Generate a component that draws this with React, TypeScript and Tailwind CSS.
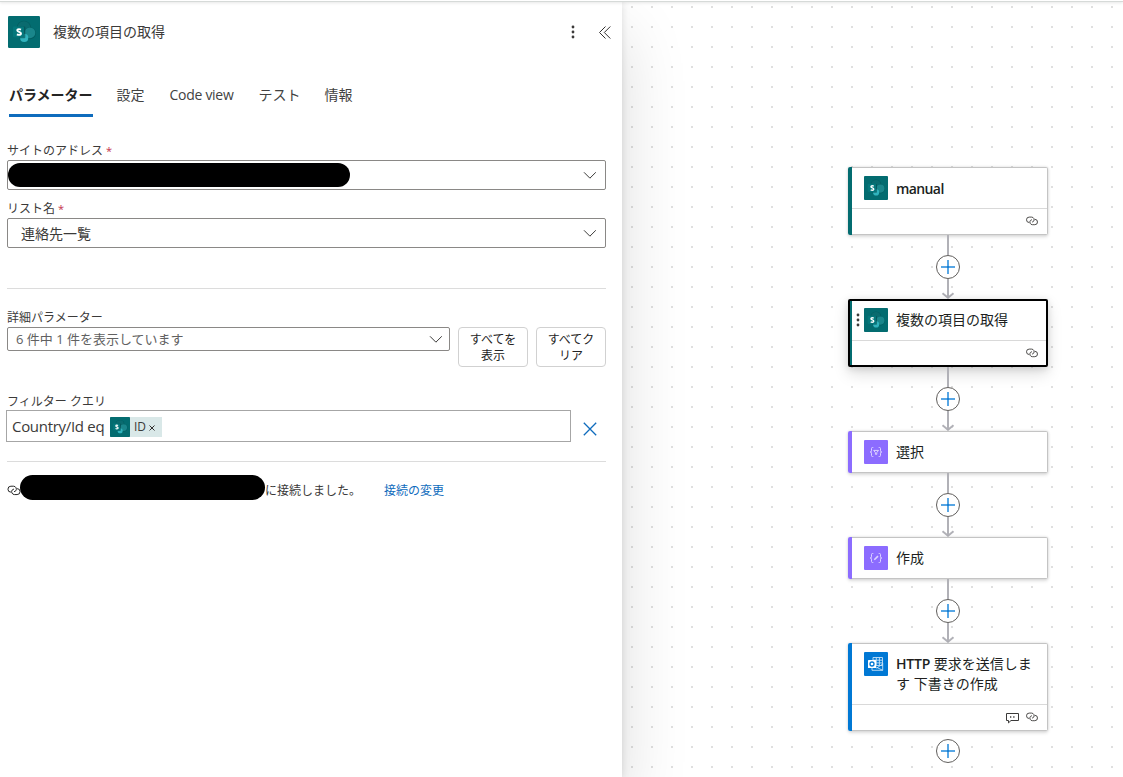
import React from "react";

function SharePointTile({ className }: { className: string }) {
  return (
    <svg className={className} viewBox="0 0 32 32">
      <rect width="32" height="32" rx="1.2" fill="#036c70" />
      <circle cx="15.9" cy="11.9" r="7.2" fill="#045559" opacity="0.6" />
      <circle cx="15.9" cy="11.5" r="6.3" fill="#0a6b6f" />
      <circle cx="21.9" cy="17.2" r="6" fill="#045559" opacity="0.6" />
      <circle cx="21.9" cy="16.8" r="5.4" fill="#1a868b" />
      <circle cx="16.2" cy="21.900" r="4.100" fill="#30b3bd" />
      <path d="M11.500 10.500h4.800a1 1 0 0 1 1 1v9.700a1 1 0 0 1-1 1H11.500z" fill="#034b4f" opacity="0.6" />
      <rect x="5" y="10.400" width="11" height="10.800" rx="0.900" fill="#04777b" />
      <path
        d="M13 13.600c-.6-.3-1.200-.5-2-.5-1.100 0-1.700.5-1.700 1.300 0 1.700 3.700 1.200 3.700 3.100 0 .9-.8 1.400-2 1.400-.8 0-1.500-.2-2.100-.5"
        fill="none"
        stroke="#fff"
        strokeWidth="1.900"
      />
    </svg>
  );
}

function BracesTile({ kind }: { kind: "select" | "compose" }) {
  return (
    <svg className="size-6 shrink-0" viewBox="0 0 24 24">
      <rect width="24" height="24" rx="1" fill="#8c6cff" />
      <g fill="none" stroke="#ddd4ff" strokeWidth="1">
        <path d="M9.300 7.500H8.500Q7.500 7.500 7.500 8.500V10.800Q7.500 12 6.200 12Q7.500 12 7.500 13.200V15.500Q7.500 16.500 8.500 16.500H9.300" />
        <path d="M14.700 7.500H15.500Q16.500 7.500 16.500 8.500V10.800Q16.500 12 17.800 12Q16.500 12 16.500 13.200V15.500Q16.500 16.500 15.500 16.500H14.700" />
        {kind === "select" ? (
          <path d="M9.700 10.400h4.800l-1.700 2.200v1.700h-1.400v-1.700z" />
        ) : (
          <path d="M10.300 13.800l3.700-3.700" strokeWidth="1.600" />
        )}
      </g>
    </svg>
  );
}

function OutlookTile() {
  return (
    <svg className="size-6 shrink-0" viewBox="0 0 24 24">
      <rect width="24" height="24" rx="1" fill="#0078d4" />
      <g stroke="#c5e1f6" strokeWidth="0.9" fill="none">
        <path d="M9 5.500h9.500v8H9zM12.300 5.500v8M15.400 5.500v8M9 8.200h9.500M9 10.900h9.500" />
        <path d="M8 16v2.300h10.700V11M12 15l6.700 3.300M12.500 16.200L18.700 12" />
      </g>
      <rect x="4" y="8" width="8" height="8" rx="0.500" fill="#fff" />
      <circle cx="8" cy="12" r="2" fill="none" stroke="#0078d4" strokeWidth="1.300" />
    </svg>
  );
}

function LinkIcon({ className }: { className: string }) {
  return (
    <svg className={className} viewBox="0 0 12 10" fill="none" stroke="currentColor" strokeWidth="0.9">
      <path d="M3.200 6.500A2.700 2.700 0 0 1 3.200 1.100H5.600A2.600 2.600 0 0 1 7.600 5.300C7.200 5.800 6.600 6 6 6" />
      <path d="M8.800 3.300A2.700 2.700 0 0 1 8.800 8.700H6.400A2.600 2.600 0 0 1 4.400 4.500C4.800 4 5.400 3.800 6 3.800" />
    </svg>
  );
}

function CommentIcon() {
  return (
    <svg className="h-3 w-[13px]" viewBox="0 0 13 12" fill="none" stroke="#3b3a39" strokeWidth="1">
      <path d="M.5 1.500h12v7H5L2.500 10.900V8.500h-2z" />
      <path d="M4 5h1.300M7.200 5h1.300" strokeWidth="1.300" />
    </svg>
  );
}

function Chevron() {
  return (
    <svg className="h-[8px] w-[13px] shrink-0" viewBox="0 0 13 8" fill="none" stroke="#3b3a39" strokeWidth="1">
      <path d="M1 1.300l5.900 5.900L12.800 1.300" />
    </svg>
  );
}

function Dots({ className }: { className: string }) {
  return (
    <svg className={className} viewBox="0 0 4 14" fill="#3b3a39">
      <circle cx="2" cy="2" r="1.400" />
      <circle cx="2" cy="7" r="1.400" />
      <circle cx="2" cy="12" r="1.400" />
    </svg>
  );
}

function AddButton() {
  return (
    <svg className="size-6 shrink-0" viewBox="0 0 24 24">
      <circle cx="12" cy="12" r="11.500" fill="#fff" stroke="#605e5c" strokeWidth="1" />
      <path d="M5 12h14M12 5v14" stroke="#58a6e4" strokeWidth="2" />
      <path d="M11 12h2" stroke="#1a80d4" strokeWidth="2" />
    </svg>
  );
}

function Connector() {
  return (
    <div className="flex h-16 flex-col items-center">
      <div className="h-5 w-[2px] bg-[#b1b1b7]" />
      <AddButton />
      <svg className="h-5 w-4" viewBox="0 0 16 20" fill="none" stroke="#b1b1b7" strokeWidth="2">
        <path d="M8 0v18.500M2.500 14.300L8 18.700l5.500-4.400" />
      </svg>
    </div>
  );
}

const accents = {
  teal: "bg-[#036c70]",
  violet: "bg-[#8c6cff]",
  blue: "bg-[#0078d4]",
};

function Node({
  accent,
  icon,
  title,
  footer,
}: {
  accent: keyof typeof accents;
  icon: React.ReactNode;
  title: React.ReactNode;
  footer?: React.ReactNode;
}) {
  return (
    <div className="flex w-[200px] rounded-[2px] bg-white shadow-[0_1.600px_3.600px_rgba(0,0,0,0.13),0_0_3px_rgba(0,0,0,0.11)]">
      <div className={`w-1 shrink-0 rounded-l-[2px] ${accents[accent]}`} />
      <div className="min-w-0 flex-1 rounded-r-[2px] border border-l-0 border-[#c4c4c4]">
        <div className="flex gap-2 py-2 pr-3 pl-3">
          {icon}
          <div className="text-[14px] leading-5 text-[#201f1e]">{title}</div>
        </div>
        {footer && (
          <div className="flex h-[26px] items-center justify-end gap-2 border-t border-[#d9d9d9] pr-[9px] text-[#3b3a39]">
            {footer}
          </div>
        )}
      </div>
    </div>
  );
}

function SelectedNode() {
  return (
    <div className="flex h-[68px] w-[200px] rounded-[2px] border-2 border-black bg-white shadow-[0_6.400px_14.400px_rgba(0,0,0,0.13),0_1.200px_7px_rgba(0,0,0,0.11)]">
      <div className="w-[2px] shrink-0 bg-[#036c70]" />
      <div className="flex-1">
        <div className="flex h-[39px] items-start pt-[7px] pl-1">
          <Dots className="mt-[5px] h-[14px] w-1" />
          <SharePointTile className="ml-1 size-6 shrink-0" />
          <div className="ml-2 pt-[2px] text-[14px] leading-5 text-[#201f1e]">複数の項目の取得</div>
        </div>
        <div className="flex h-[25px] items-center justify-end border-t border-[#d9d9d9] pr-2 text-[#3b3a39]">
          <LinkIcon className="h-[10px] w-3" />
        </div>
      </div>
    </div>
  );
}

function Label({ children, required }: { children: React.ReactNode; required?: boolean }) {
  return (
    <div className="h-4 text-[12px] leading-[18px] whitespace-nowrap">
      {children}
      {required && <span className="ml-[3px] text-[11px] text-[#c4314b]">*</span>}
    </div>
  );
}

function DetailsPanel() {
  return (
    <section className="relative h-full w-[622px] shrink-0 bg-white text-[#3b3a39] shadow-[0_0_8px_rgba(0,0,0,0.12),0_32px_64px_rgba(0,0,0,0.14)]">
      <header className="flex h-[46px] items-end pl-2">
        <SharePointTile className="size-8" />
        <h1 className="ml-[13px] flex h-8 flex-1 items-center pb-[2px] text-[14px]">複数の項目の取得</h1>
        <div className="flex h-8 items-center pr-[11px]">
          <Dots className="h-[14px] w-1" />
          <svg className="ml-6 h-[13px] w-[12px]" viewBox="0 0 12 13" fill="none" stroke="#323130" strokeWidth="1">
            <path d="M6.500.5l-6 6 6 6M11.300.5l-6 6 6 6" />
          </svg>
        </div>
      </header>

      <nav className="mt-[32px] flex h-[37px] gap-6 pl-[9px] text-[14px] leading-[30px] text-[#424242]">
        <div className="border-b-[3px] border-[#0f6cbd] font-bold text-[#242424]">パラメーター</div>
        <div>設定</div>
        <div className="ml-px w-[65px] tracking-[-0.3px] whitespace-nowrap">Code view</div>
        <div>テスト</div>
        <div>情報</div>
      </nav>

      <div className="pt-[25px] pl-[7px]">
        <Label required>サイトのアドレス</Label>
        <div className="mt-[2px] flex h-[30px] w-[599px] items-center justify-between rounded-[2px] border border-[#8a8886] pr-[9px]">
          <div className="h-6 w-[342px] rounded-full bg-black" />
          <Chevron />
        </div>
        <div className="h-[10px]" />
        <Label required>リスト名</Label>
        <div className="mt-[2px] flex h-[30px] w-[599px] items-center justify-between rounded-[2px] border border-[#8a8886] pr-[9px] pl-[13px] text-[14px]">
          <span>連絡先一覧</span>
          <Chevron />
        </div>

        <div className="mt-[40px] h-px w-[599px] bg-[#dcdcdc]" />

        <div className="mt-5 flex w-[599px] items-start gap-2">
          <div className="flex-1">
            <Label>詳細パラメーター</Label>
            <div className="mt-[2px] flex h-6 items-center justify-between rounded-[2px] border border-[#8a8886] pr-[7px] pl-2 text-[13px] text-[#616161]">
              <span className="pt-px">6 件中 1 件を表示しています</span>
              <Chevron />
            </div>
          </div>
          <button className="mt-[18px] h-10 w-[70px] rounded-[4px] border border-[#d1d1d1] px-2 pt-[2px] text-[12px] leading-4 text-[#242424]">
            すべてを<br />表示
          </button>
          <button className="mt-[18px] h-10 w-[70px] rounded-[4px] border border-[#d1d1d1] px-2 pt-[2px] text-[12px] leading-4 text-[#242424]">
            すべてク<br />リア
          </button>
        </div>

        <div className="mt-[26px]">
          <Label>フィルター クエリ</Label>
        </div>
        <div className="mt-px -ml-px flex items-center">
          <div className="flex h-8 w-[565px] items-center border border-[#a6a6a6] pl-[5px] text-[15px]">
            <span className="w-[98px] tracking-[-0.3px] whitespace-nowrap">Country/Id eq</span>
            <span className="mt-[2px] flex h-5 w-[52px] items-center bg-[#d9e8e8] text-[12px]">
              <SharePointTile className="size-5" />
              <span className="ml-1">ID</span>
              <svg className="mt-[2px] ml-[3px] size-[6px]" viewBox="0 0 6 6" stroke="#323130" strokeWidth="1.000">
                <path d="M.5.5l5 5M5.500.5l-5 5" />
              </svg>
            </span>
          </div>
          <svg className="mt-[6px] ml-3 size-[14px]" viewBox="0 0 14 14" stroke="#0f6cbd" strokeWidth="1.300">
            <path d="M.8.8l12.400 12.400M13.200.8L.8 13.200" />
          </svg>
        </div>

        <div className="mt-[19px] h-px w-[599px] bg-[#dcdcdc]" />

        <div className="mt-[13px] flex h-[25px] text-[12px]">
          <LinkIcon className="mt-[10px] h-[11px] w-[14px] shrink-0 text-[#242424]" />
          <div className="-ml-px h-[25px] w-[245px] rounded-full bg-black" />
          <span className="mt-2 leading-4">に接続しました。</span>
          <a className="mt-2 ml-[23px] leading-4 text-[#0f6cbd]">接続の変更</a>
        </div>
      </div>
    </section>
  );
}

function FlowCanvas() {
  return (
    <section className="flex min-w-0 flex-1 flex-col items-start bg-[linear-gradient(#fff_18px,transparent_0),linear-gradient(90deg,#fff_18px,#dfdfdf_0)] bg-size-[20px_20px] bg-position-[-9px_-14px] pt-[165px] pl-[226px]">
      <Node
        accent="teal"
        icon={<SharePointTile className="size-6 shrink-0" />}
        title={<div className="pt-[3px] font-semibold tracking-[-0.6px]">manual</div>}
        footer={<LinkIcon className="-mt-px h-[10px] w-3" />}
      />
      <div className="flex w-[200px] flex-col items-center">
        <Connector />
        <SelectedNode />
        <Connector />
        <Node accent="violet" icon={<BracesTile kind="select" />} title={<div className="pt-[2px]">選択</div>} />
        <Connector />
        <Node accent="violet" icon={<BracesTile kind="compose" />} title={<div className="pt-[2px]">作成</div>} />
        <Connector />
        <Node
          accent="blue"
          icon={<OutlookTile />}
          title={
            <div className="pt-[2px] pb-[2px]">
              <span className="font-semibold tracking-[-0.2px]">HTTP</span> 要求を送信しま<br />す 下書きの作成
            </div>
          }
          footer={
            <>
              <CommentIcon />
              <LinkIcon className="-ml-px -mt-px h-[10px] w-3" />
            </>
          }
        />
        <div className="mt-2 flex">
          <AddButton />
        </div>
      </div>
    </section>
  );
}

export default function App() {
  return (
    <div
      lang="ja"
      className="flex h-[777px] w-[1123px] flex-col overflow-hidden bg-white font-['Open_Sans','Noto_Sans_CJK_JP',sans-serif]"
    >
      <div className="relative z-10 h-[2px] shrink-0 border-b border-[#d6dad8] bg-white shadow-[0_1px_3px_rgba(0,0,0,0.12)]" />
      <main className="flex min-h-0 flex-1">
        <DetailsPanel />
        <FlowCanvas />
      </main>
    </div>
  );
}
